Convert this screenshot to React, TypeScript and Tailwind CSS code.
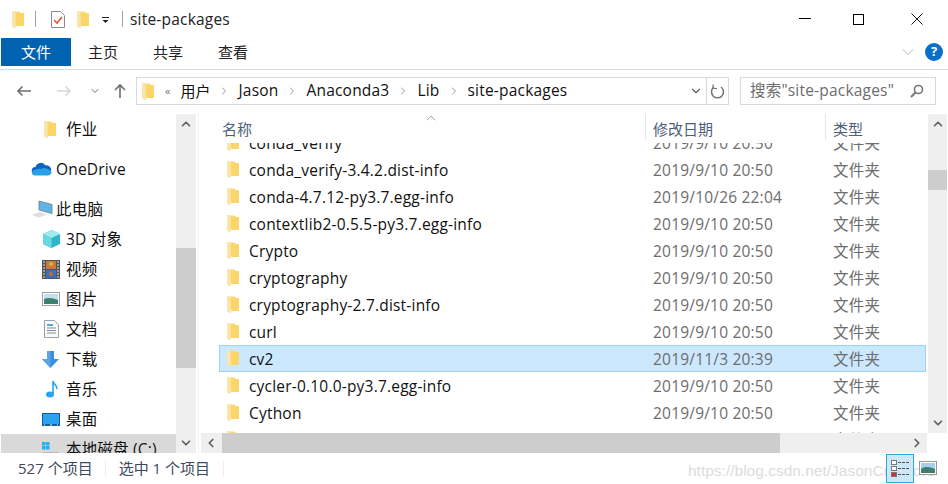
import { ChevronDown, ChevronLeft, ChevronRight, ChevronUp } from "lucide-react";

const rows = [
  { name: "conda_verify", date: "2019/9/10 20:50" },
  { name: "conda_verify-3.4.2.dist-info", date: "2019/9/10 20:50" },
  { name: "conda-4.7.12-py3.7.egg-info", date: "2019/10/26 22:04" },
  { name: "contextlib2-0.5.5-py3.7.egg-info", date: "2019/9/10 20:50" },
  { name: "Crypto", date: "2019/9/10 20:50" },
  { name: "cryptography", date: "2019/9/10 20:50" },
  { name: "cryptography-2.7.dist-info", date: "2019/9/10 20:50" },
  { name: "curl", date: "2019/9/10 20:50" },
  { name: "cv2", date: "2019/11/3 20:39", selected: true },
  { name: "cycler-0.10.0-py3.7.egg-info", date: "2019/9/10 20:50" },
  { name: "Cython", date: "2019/9/10 20:50" },
  { name: "cytoolz", date: "2019/9/10 20:50" },
];

const latin = "text-[15.5px] tracking-[0.2px]";

function Folder({ className = "" }: { className?: string }) {
  return (
    <svg width="12" height="17" viewBox="0 0 12 17" className={`shrink-0 ${className}`}>
      <path d="M0 0.500h7.500L9 2h3v13H4.500L3 17 0 15.500z" fill="#fcd877" />
      <path d="M4 2.500h8V15H4.500z" fill="#fbd568" />
      <path d="M0 0.500h3.500L3.500 13 5 15H4l-1 2-3-1.500z" fill="#f8e6ae" />
    </svg>
  );
}

function SideRow({ icon, label, indent = true, className = "" }: { icon: React.ReactNode; label: string; indent?: boolean; className?: string }) {
  return (
    <div className={`flex h-[30px] shrink-0 items-center ${indent ? "pl-[41px]" : "pl-[30px]"} ${className}`}>
      <div className={`flex items-center justify-start ${indent ? "w-[24px]" : "w-[25px]"}`}>{icon}</div>
      <span className={`pt-[2px] text-[#111] ${latin}`}>{label}</span>
    </div>
  );
}

function ScrollBtn({ children }: { children: React.ReactNode }) {
  return <div className="flex h-[20px] w-[20px] shrink-0 items-center justify-center text-[#606060]">{children}</div>;
}

function Crumb() {
  return <ChevronRight size={12} strokeWidth={1.5} className="mx-[8px] text-[#777]" />;
}

export default function App() {
  return (
    <div
      className="flex h-[484px] w-[948px] flex-col overflow-hidden bg-white text-[#111]"
      style={{ fontFamily: '"Open Sans", "Noto Sans CJK SC", sans-serif' }}
    >
      {/* title bar */}
      <div className="flex h-[38px] shrink-0 items-center pl-[12px]">
        <Folder />
        <div className="ml-[11px] h-[16px] w-px bg-[#a0a0a0]" />
        <svg width="14" height="17" viewBox="0 0 14 17" className="ml-[15px]">
          <path d="M0.500 0.500h9l4 4v12h-13z" fill="#fff" stroke="#8a8a8a" />
          <path d="M3 9l3 3 5-6" fill="none" stroke="#e2572b" strokeWidth="1.6" />
        </svg>
        <Folder className="ml-[12px]" />
        <svg width="10" height="8" viewBox="0 0 10 8" className="ml-[12px] mt-[3px]">
          <path d="M1 0.500h7" stroke="#222" />
          <path d="M1.500 3h6l-3 3z" fill="#222" />
        </svg>
        <div className="ml-[11px] h-[16px] w-px bg-[#a0a0a0]" />
        <span className={`ml-[7px] pt-[2px] text-[#222] ${latin}`}>site-packages</span>
        <div className="ml-auto flex items-center">
          <div className="mr-[42px] mt-[-2px] h-px w-[12px] bg-black" />
          <div className="mr-[47px] h-[11px] w-[11px] border border-black" />
          <svg width="12" height="12" viewBox="0 0 12 12" className="mr-[25px]">
            <path d="M0.500 0.500l11 11M11.500 0.500l-11 11" stroke="#111" fill="none" />
          </svg>
        </div>
      </div>

      {/* ribbon */}
      <div className="flex h-[32px] shrink-0 items-start border-b border-[#dadada] pl-px">
        <div className="flex h-[28px] w-[70px] items-center justify-center bg-[#0063b1] text-[15px] text-white">文件</div>
        <div className="ml-[17px] flex h-[28px] items-center text-[15px] text-[#222]">主页</div>
        <div className="ml-[35px] flex h-[28px] items-center text-[15px] text-[#222]">共享</div>
        <div className="ml-[35px] flex h-[28px] items-center text-[15px] text-[#222]">查看</div>
        <div className="ml-auto flex h-[28px] items-center pr-[5px]">
          <ChevronDown size={20} strokeWidth={1} className="mr-[7px] text-[#aaa]" />
          <div className="flex h-[18px] w-[18px] items-center justify-center rounded-full bg-[#0a6fc9] text-[13px] font-bold text-white">?</div>
        </div>
      </div>

      {/* address bar */}
      <div className="flex h-[44px] shrink-0 items-center pb-[2px]">
        <svg width="16" height="12" viewBox="0 0 16 12" className="ml-[16px]">
          <path d="M15 6H2M6.500 1.500L2 6l4.500 4.500" fill="none" stroke="#6d6d6d" strokeWidth="1.6" />
        </svg>
        <svg width="16" height="12" viewBox="0 0 16 12" className="ml-[24px]">
          <path d="M1 6h13M9.500 1.500L14 6l-4.500 4.500" fill="none" stroke="#d8d8d8" strokeWidth="1.6" />
        </svg>
        <ChevronDown size={12} strokeWidth={2} className="ml-[17px] text-[#707070]" />
        <svg width="14" height="16" viewBox="0 0 14 16" className="ml-[12px]">
          <path d="M7 15V2M2 7l5-5 5 5" fill="none" stroke="#6d6d6d" strokeWidth="1.6" />
        </svg>
        <div className="ml-[9px] flex h-[28px] w-[593px] items-center border border-[#d9d9d9] pl-[5px]">
          <Folder />
          <span className="ml-[11px] text-[11px] text-[#777]">«</span>
          <span className="ml-[10px] text-[15px]">用户</span>
          <Crumb />
          <span className={latin}>Jason</span>
          <Crumb />
          <span className={latin}>Anaconda3</span>
          <Crumb />
          <span className={latin}>Lib</span>
          <Crumb />
          <span className={latin}>site-packages</span>
          <ChevronDown size={14} strokeWidth={2} className="ml-auto mr-[3px] text-[#606060]" />
          <div className="flex h-full w-[22px] items-center justify-center border-l border-[#d9d9d9]">
            <svg width="15" height="15" viewBox="0 0 15 15">
              <path d="M4 3a6 6 0 1 0 7 0" fill="none" stroke="#777" strokeWidth="1.500" />
              <path d="M3 0.500v4h4" fill="none" stroke="#777" strokeWidth="1.200" />
            </svg>
          </div>
        </div>
        <div className={`ml-[11px] flex h-[28px] w-[196px] items-center border border-[#d9d9d9] pl-[9px] text-[#6d6d6d] ${latin}`}>
          <span>搜索"site-packages"</span>
          <svg width="14" height="14" viewBox="0 0 14 14" className="ml-auto mr-[11px]">
            <circle cx="8.500" cy="5.500" r="4" fill="none" stroke="#777" strokeWidth="1.600" />
            <path d="M5.500 8.500L1 13" stroke="#777" strokeWidth="2" />
          </svg>
        </div>
      </div>

      {/* body */}
      <div className="flex min-h-0 flex-1">
        {/* nav pane */}
        <div className="flex w-[176px] shrink-0 flex-col overflow-hidden pt-px pl-px">
          <SideRow icon={<Folder className="ml-[2px]" />} label="作业" className="mt-[-1px]" />
          <div className="h-[10px] shrink-0" />
          <SideRow
            indent={false}
            label="OneDrive"
            icon={
              <svg width="21" height="14" viewBox="0 0 21 14">
                <path d="M5 13a4 4 0 0 1-.5-8 5.500 5.500 0 0 1 10-1.500A4.500 4.500 0 0 1 20 9a4 4 0 0 1-4 4z" fill="#0a64c4" />
                <path d="M4 13.500a3.200 3.200 0 0 1-3-3c0-1.500 2-3 4-3 2-1 3-1 5-.5 3-2 6-1 7.500.5 2 .5 3.500 2 3 3.500-1 2-3 2.500-4 2.500z" fill="#2aa0e8" />
              </svg>
            }
          />
          <div className="h-[10px] shrink-0" />
          <SideRow
            indent={false}
            label="此电脑"
            icon={
              <svg width="21" height="18" viewBox="0 0 21 18" className="ml-px">
                <path d="M7 1l13 3.500v9L7 10z" fill="#5db5e8" stroke="#7d8c9a" />
                <path d="M0 15l8-3 7 2.500-8 3z" fill="#dedede" />
              </svg>
            }
          />
          <SideRow
            label="3D 对象"
            icon={
              <svg width="19" height="18" viewBox="0 0 19 18">
                <path d="M9.500 0L18 4v10l-8.500 4L1 14V4z" fill="#2fb7c9" />
                <path d="M1 4l8.500 4L18 4 9.500 0z" fill="#a3eaf0" />
                <path d="M1 4l8.500 4v10L1 14z" fill="#6ad8e0" />
              </svg>
            }
          />
          <SideRow
            label="视频"
            icon={
              <svg width="18" height="19" viewBox="0 0 18 19">
                <rect width="18" height="19" fill="#555" />
                <rect x="4" y="1" width="10" height="8" fill="#d0763a" />
                <circle cx="9" cy="4" r="2" fill="#b8c040" />
                <rect x="4" y="10" width="10" height="8" fill="#3c6fc4" />
                <circle cx="9" cy="14" r="2" fill="#c86a30" />
                <path d="M1 2h2M1 5h2M1 8h2M1 11h2M1 14h2M1 17h2M15 2h2M15 5h2M15 8h2M15 11h2M15 14h2M15 17h2" stroke="#ddd" />
              </svg>
            }
          />
          <SideRow
            label="图片"
            icon={
              <svg width="18" height="14" viewBox="0 0 18 14">
                <rect x="0.500" y="0.500" width="17" height="13" fill="#fff" stroke="#a0a0a0" />
                <rect x="2" y="2" width="14" height="10" fill="#c4dff0" />
                <path d="M2 7c4-2 9-1 14 1v4H2z" fill="#3f7f70" />
              </svg>
            }
          />
          <SideRow
            label="文档"
            icon={
              <svg width="15" height="18" viewBox="0 0 15 18" className="ml-[2px]">
                <path d="M0.500 0.500h10l4 4v13H0.500z" fill="#f8f8f8" stroke="#a0a0a0" />
                <path d="M3 5h6" stroke="#2a8adf" strokeWidth="1.500" />
                <path d="M3 8h9M3 10.500h9M3 13h9" stroke="#7d93a3" />
              </svg>
            }
          />
          <SideRow
            label="下载"
            icon={
              <svg width="17" height="17" viewBox="0 0 17 17">
                <path d="M5 0h7v8h5l-8.500 9L0 8h5z" fill="#3d8ddc" />
                <path d="M5 0h3.500v17L0 8h5z" fill="#5aa5ea" />
              </svg>
            }
          />
          <SideRow
            label="音乐"
            icon={
              <svg width="14" height="18" viewBox="0 0 14 18" className="ml-[3px]">
                <ellipse cx="5" cy="14.500" rx="4" ry="3" fill="#27a3f0" />
                <path d="M8 14V1c0 3 4 3.500 4 8" fill="none" stroke="#27a3f0" strokeWidth="1.600" />
              </svg>
            }
          />
          <SideRow
            label="桌面"
            icon={
              <svg width="18" height="13" viewBox="0 0 18 13">
                <rect width="18" height="13" fill="#0d5fa8" />
                <rect x="1" y="1" width="16" height="10" fill="#2ba3ef" />
                <path d="M2 12h1M8 12h2M15 12h1" stroke="#fff" />
              </svg>
            }
          />
          <div className="flex h-[30px] shrink-0 items-center bg-[#d9d9d9] pl-[40px]">
            <svg width="18" height="14" viewBox="0 0 18 14" className="mr-[7px]">
              <rect x="1" y="0" width="3.500" height="3.500" fill="#1eb0f0" />
              <rect x="5" y="0" width="3.500" height="3.500" fill="#1eb0f0" />
              <rect x="1" y="4" width="3.500" height="3.500" fill="#1eb0f0" />
              <rect x="5" y="4" width="3.500" height="3.500" fill="#1eb0f0" />
              <rect x="2" y="10" width="16" height="4" fill="#bbb" />
            </svg>
            <span className={`pt-[2px] ${latin}`}>本地磁盘 (C:)</span>
          </div>
        </div>

        {/* nav scrollbar */}
        <div className="flex w-[20px] shrink-0 flex-col bg-[#efefef]">
          <ScrollBtn><ChevronUp size={14} strokeWidth={3} /></ScrollBtn>
          <div className="mt-[114px] h-[120px] shrink-0 bg-[#cdcdcd]" />
          <div className="flex-1" />
          <ScrollBtn><ChevronDown size={14} strokeWidth={3} /></ScrollBtn>
        </div>
        <div className="ml-[2px] w-px shrink-0 bg-[#f2f2f2]" />

        {/* file list */}
        <div className="ml-[2px] flex min-w-0 flex-1 flex-col">
          <div className="flex min-h-0 flex-1">
            <div className="flex min-w-0 flex-1 flex-col">
              <div className="relative flex h-[29px] shrink-0 items-start text-[15px] text-[#4c607a]">
                <ChevronUp size={16} strokeWidth={1} className="absolute left-[222px] top-[-4px] text-[#777]" />
                <div className="mt-[4px] w-[444px] pl-[21px]">名称</div>
                <div className="h-[26px] w-[180px] border-l border-[#e5e5e5] pl-[7px] pt-[4px]">修改日期</div>
                <div className="h-[26px] flex-1 border-l border-[#e5e5e5] pl-[7px] pt-[4px]">类型</div>
              </div>
              <div className="min-h-0 flex-1 overflow-hidden pl-[18px] pr-[2px]">
                <div className="mt-[-14px]">
                  {rows.map((r) => (
                    <div
                      key={r.name}
                      className={`flex h-[27px] items-center border ${latin} ${r.selected ? "border-[#99d1ff] bg-[#cce8ff]" : "border-transparent"}`}
                    >
                      <div className="flex w-[433px] items-center pl-[7px]">
                        <Folder />
                        <span className="ml-[10px] pt-[3px] text-[#111]">{r.name}</span>
                      </div>
                      <span className="w-[180px] pt-[3px] text-[#6d6d6d]">{r.date}</span>
                      <span className="pt-[3px] text-[#6d6d6d]">文件夹</span>
                    </div>
                  ))}
                </div>
              </div>
            </div>
            <div className="mr-[1px] flex w-[19px] shrink-0 flex-col bg-[#efefef]">
              <ScrollBtn><ChevronUp size={14} strokeWidth={3} /></ScrollBtn>
              <div className="mt-[36px] h-[20px] shrink-0 bg-[#cdcdcd]" />
              <div className="flex-1" />
              <ScrollBtn><ChevronDown size={14} strokeWidth={3} /></ScrollBtn>
            </div>
          </div>
          <div className="mr-[21px] flex h-[20px] shrink-0 bg-[#efefef]">
            <ScrollBtn><ChevronLeft size={14} strokeWidth={3} /></ScrollBtn>
            <div className="ml-px h-full w-[558px] bg-[#cdcdcd]" />
            <div className="flex-1" />
            <ScrollBtn><ChevronRight size={14} strokeWidth={3} /></ScrollBtn>
          </div>
        </div>
      </div>

      {/* status bar */}
      <div className="relative flex h-[31px] shrink-0 items-center pl-[18px] text-[15px] text-[#3c4a5c]">
        <span>527 个项目</span>
        <div className="ml-[12px] h-[16px] w-px bg-[#eee]" />
        <span className="ml-[13px]">选中 1 个项目</span>
        <div className="ml-[13px] h-[16px] w-px bg-[#eee]" />
        <span className="absolute left-[688px] top-[6px] text-[15.5px] text-[#dcdcdc]" style={{ fontFamily: '"Liberation Sans", sans-serif' }}>
          https://blog.csdn.net/JasonCrowford
        </span>
        <div className="absolute left-[886px] top-[1px] flex h-[29px] w-[28px] items-center justify-center border border-[#2ea4e0] bg-[#cce8f6]">
          <svg width="19" height="17" viewBox="0 0 19 17">
            <rect x="0.500" y="0.500" width="5" height="4" fill="#fff" stroke="#777" />
            <rect x="0.500" y="6.500" width="5" height="4" fill="#fff" stroke="#777" />
            <rect x="0.500" y="12.500" width="5" height="4" fill="#c33" stroke="#777" />
            <path d="M7 2.500h12M7 8.500h12M7 14.500h12" stroke="#555" strokeDasharray="3 1" />
          </svg>
        </div>
        <svg width="18" height="14" viewBox="0 0 18 14" className="absolute left-[919px] top-[8px]">
          <rect x="0.500" y="0.500" width="17" height="13" fill="#fff" stroke="#9a9a9a" />
          <rect x="2" y="2" width="14" height="10" fill="#a9cdea" />
          <path d="M2 8c4-3 9-2 14 0v4H2z" fill="#3f7f70" />
        </svg>
      </div>
    </div>
  );
}
